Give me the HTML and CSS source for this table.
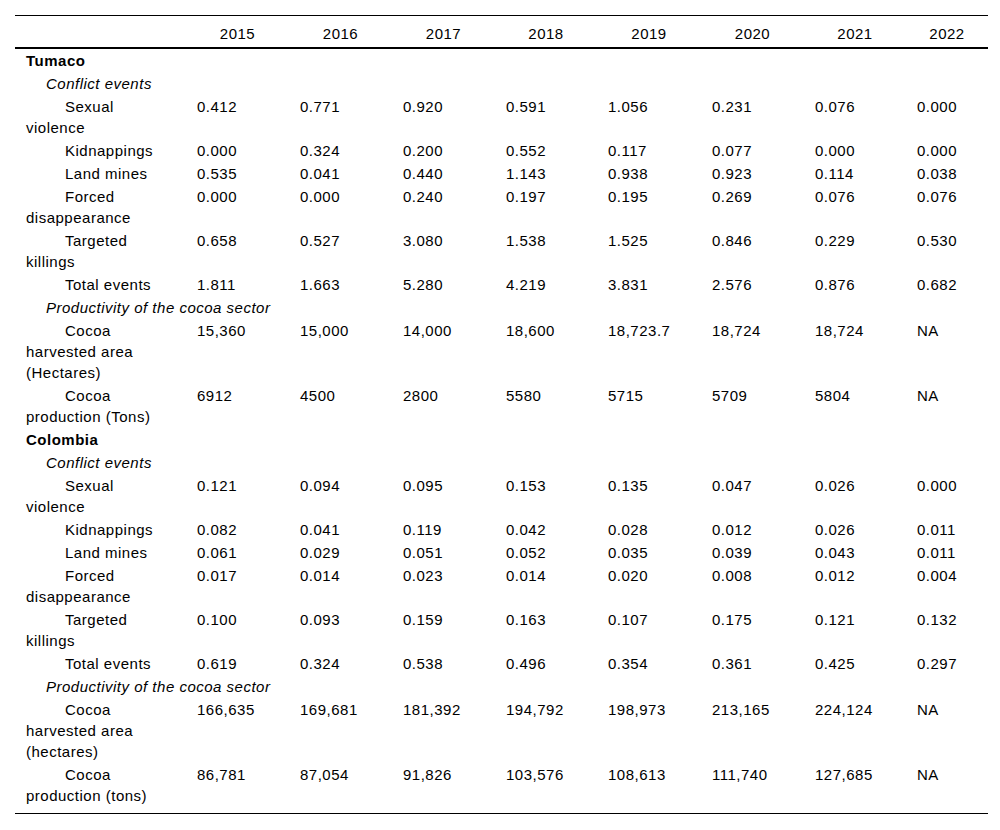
FILE: index.html
```html
<!DOCTYPE html>
<html lang="en">
<head>
<meta charset="utf-8">
<title>Conflict events and cocoa productivity</title>
<link rel="stylesheet" href="styles.css">
</head>
<body>
<div class="page">
<table class="data">
<colgroup>
<col class="c-label">
<col class="c-y"><col class="c-y"><col class="c-y"><col class="c-y18">
<col class="c-y19"><col class="c-y"><col class="c-y18"><col class="c-last">
</colgroup>
<thead>
<tr>
<th></th><th>2015</th><th>2016</th><th>2017</th><th>2018</th><th>2019</th><th>2020</th><th>2021</th><th>2022</th>
</tr>
</thead>
<tbody>
<tr class="group"><td colspan="9">Tumaco</td></tr>
<tr class="sub"><td colspan="9">Conflict events</td></tr>
<tr><td class="label">Sexual violence</td><td>0.412</td><td>0.771</td><td>0.920</td><td>0.591</td><td>1.056</td><td>0.231</td><td>0.076</td><td>0.000</td></tr>
<tr><td class="label">Kidnappings</td><td>0.000</td><td>0.324</td><td>0.200</td><td>0.552</td><td>0.117</td><td>0.077</td><td>0.000</td><td>0.000</td></tr>
<tr><td class="label">Land mines</td><td>0.535</td><td>0.041</td><td>0.440</td><td>1.143</td><td>0.938</td><td>0.923</td><td>0.114</td><td>0.038</td></tr>
<tr><td class="label">Forced disappearance</td><td>0.000</td><td>0.000</td><td>0.240</td><td>0.197</td><td>0.195</td><td>0.269</td><td>0.076</td><td>0.076</td></tr>
<tr><td class="label">Targeted killings</td><td>0.658</td><td>0.527</td><td>3.080</td><td>1.538</td><td>1.525</td><td>0.846</td><td>0.229</td><td>0.530</td></tr>
<tr><td class="label">Total events</td><td>1.811</td><td>1.663</td><td>5.280</td><td>4.219</td><td>3.831</td><td>2.576</td><td>0.876</td><td>0.682</td></tr>
<tr class="sub"><td colspan="9">Productivity of the cocoa sector</td></tr>
<tr><td class="label">Cocoa harvested area (Hectares)</td><td>15,360</td><td>15,000</td><td>14,000</td><td>18,600</td><td>18,723.7</td><td>18,724</td><td>18,724</td><td>NA</td></tr>
<tr><td class="label">Cocoa production (Tons)</td><td>6912</td><td>4500</td><td>2800</td><td>5580</td><td>5715</td><td>5709</td><td>5804</td><td>NA</td></tr>
<tr class="group"><td colspan="9">Colombia</td></tr>
<tr class="sub"><td colspan="9">Conflict events</td></tr>
<tr><td class="label">Sexual violence</td><td>0.121</td><td>0.094</td><td>0.095</td><td>0.153</td><td>0.135</td><td>0.047</td><td>0.026</td><td>0.000</td></tr>
<tr><td class="label">Kidnappings</td><td>0.082</td><td>0.041</td><td>0.119</td><td>0.042</td><td>0.028</td><td>0.012</td><td>0.026</td><td>0.011</td></tr>
<tr><td class="label">Land mines</td><td>0.061</td><td>0.029</td><td>0.051</td><td>0.052</td><td>0.035</td><td>0.039</td><td>0.043</td><td>0.011</td></tr>
<tr><td class="label">Forced disappearance</td><td>0.017</td><td>0.014</td><td>0.023</td><td>0.014</td><td>0.020</td><td>0.008</td><td>0.012</td><td>0.004</td></tr>
<tr><td class="label">Targeted killings</td><td>0.100</td><td>0.093</td><td>0.159</td><td>0.163</td><td>0.107</td><td>0.175</td><td>0.121</td><td>0.132</td></tr>
<tr><td class="label">Total events</td><td>0.619</td><td>0.324</td><td>0.538</td><td>0.496</td><td>0.354</td><td>0.361</td><td>0.425</td><td>0.297</td></tr>
<tr class="sub"><td colspan="9">Productivity of the cocoa sector</td></tr>
<tr><td class="label">Cocoa harvested area (hectares)</td><td>166,635</td><td>169,681</td><td>181,392</td><td>194,792</td><td>198,973</td><td>213,165</td><td>224,124</td><td>NA</td></tr>
<tr class="last"><td class="label">Cocoa production (tons)</td><td>86,781</td><td>87,054</td><td>91,826</td><td>103,576</td><td>108,613</td><td>111,740</td><td>127,685</td><td>NA</td></tr>
</tbody>
</table>
</div>
</body>
</html>
```

FILE: styles.css
```css
html, body {
  margin: 0;
  padding: 0;
  background: #fff;
}

.page {
  padding: 15px 0 0 15px;
}

.data {
  width: 973px;
  table-layout: fixed;
  border-collapse: collapse;
  font-family: "Liberation Sans", Arial, sans-serif;
  font-size: 15px;
  letter-spacing: 0.5px;
  line-height: 21px;
  color: #000;
  border-top: 1px solid #000;
  border-bottom: 1px solid #000;
}

.c-label { width: 171px; }
.c-y { width: 103px; }
.c-y18 { width: 102px; }
.c-y19 { width: 104px; }
.c-last { width: 82px; }

.data th {
  font-weight: normal;
  text-align: center;
  padding: 7px 11px 3px;
  border-bottom: 2px solid #000;
}

.data td {
  padding: 1px 11px;
  text-align: left;
  vertical-align: top;
}

.data .group td {
  font-weight: bold;
}

.data .sub td {
  font-style: italic;
  text-indent: 20px;
}

.data td.label {
  text-indent: 39px;
}

.data .last td {
  padding-bottom: 7px;
}
```
